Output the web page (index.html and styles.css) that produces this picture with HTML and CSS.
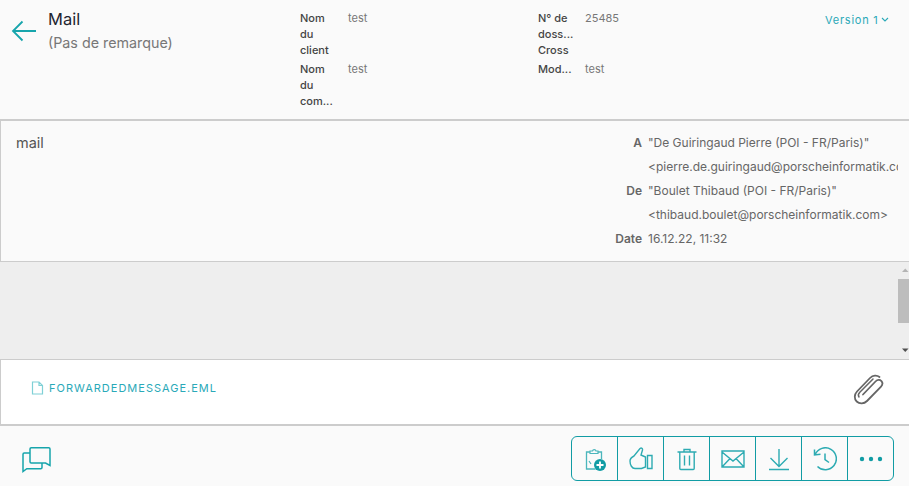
FILE: index.html
```html
<!DOCTYPE html>
<html lang="fr">
<head>
<meta charset="utf-8">
<title>Mail</title>
<link rel="stylesheet" href="styles.css">
</head>
<body>
<header class="head">
  <svg class="back" width="26" height="26" viewBox="0 0 26 26"><path d="M25 13H2M11.500 3.500L2 13l9.500 9.500" fill="none" stroke="#17a5ac" stroke-width="1.800"/></svg>
  <div class="title">
    <div class="name">Mail</div>
    <div class="remark">(Pas de remarque)</div>
  </div>
  <div class="meta">
    <div class="label">Nom<br>du<br>client</div><div class="value">test</div>
    <div class="label">N° de<br>doss...<br>Cross</div><div class="value">25485</div>
    <div class="label">Nom<br>du<br>com...</div><div class="value">test</div>
    <div class="label">Mod...</div><div class="value">test</div>
  </div>
  <div class="version">Version 1<svg width="8" height="6" viewBox="0 0 8 6"><path d="M1 1l3 3 3-3" fill="none" stroke="#2aa9b8" stroke-width="1.100"/></svg></div>
</header>
<section class="info">
  <div class="subject">mail</div>
  <div class="addr">
    <div class="k">A</div><div class="v">"De Guiringaud Pierre (POI - FR/Paris)"</div>
    <div class="k"></div><div class="v">&lt;pierre.de.guiringaud@porscheinformatik.com&gt;</div>
    <div class="k">De</div><div class="v">"Boulet Thibaud (POI - FR/Paris)"</div>
    <div class="k"></div><div class="v">&lt;thibaud.boulet@porscheinformatik.com&gt;</div>
    <div class="k">Date</div><div class="v">16.12.22, 11:32</div>
  </div>
</section>
<section class="content">
  <div class="scroll">
    <svg class="arrow" width="11" height="17" viewBox="0 0 11 17"><path d="M4 10h6.500L7.250 6.500z" fill="#b4b4b4"/></svg>
    <div class="track"><div class="thumb"></div></div>
    <svg class="arrow" width="11" height="17" viewBox="0 0 11 17"><path d="M4 6.500h6.500L7.250 10z" fill="#505050"/></svg>
  </div>
</section>
<section class="attach">
  <div class="file">
    <svg width="13" height="14" viewBox="0 0 13 14"><path d="M1.500 1h6.500l3.500 3.500V13h-10zM8 1v3.500h3.500" fill="none" stroke="#7fd0d6" stroke-width="1.200"/></svg>
    <span>FORWARDEDMESSAGE.EML</span>
  </div>
  <svg class="clip" width="36" height="34" viewBox="0 0 36 34"><path d="M13 22.500L25.500 9.500c2-2 4.500-2 5.800-.5 1.500 1.500 1.400 3.800-.5 5.800L17 29c-3 3-7.500 3.200-10.300.5C4 26.800 4.200 22.500 7 19.500L20 6c3-3 7-3 9.500-1" fill="none" stroke="#666" stroke-width="1.800" stroke-linecap="round"/><path d="M9 25c-1-1.500-.5-3.500.8-4.800L23 7" fill="none" stroke="#666" stroke-width="1.500" stroke-linecap="round"/></svg>
</section>
<footer class="foot">
  <svg class="chat" width="29" height="26" viewBox="0 0 29 26"><path d="M8 2a1.200 1.200 0 0 1 1.200-1.200h17.600A1.200 1.200 0 0 1 28 2v16.500l-4.500-2.500H9.200A1.200 1.200 0 0 1 8 14.800z" fill="none" stroke="#17a5ac" stroke-width="1.500"/><path d="M8 6H2.200A1.200 1.200 0 0 0 1 7.200V24.500l3.800-2.800h14a1.200 1.200 0 0 0 1.200-1.200V16" fill="none" stroke="#17a5ac" stroke-width="1.500"/></svg>
  <div class="actions">
    <button class="act"><svg width="24" height="24" viewBox="0 0 24 24"><path d="M12.500 22H3.500V5H7M15 5h3.500v7" fill="none" stroke="#4bb6bc" stroke-width="1.300"/><path d="M7 6.500V4h2.500a1.800 1.800 0 0 1 3.500 0H15v2.500zM6 14l2 3" fill="none" stroke="#4bb6bc" stroke-width="1.200"/><circle cx="17" cy="18" r="6" fill="#119ca4"/><path d="M17 14.500v7M13.500 18h7" stroke="#fff" stroke-width="1.800"/></svg></button>
    <button class="act"><svg width="24" height="23" viewBox="0 0 24 23"><path d="M1 14c0-3 2-4 4-5l6-7.500c1.500-1 2.800 0 2.500 1.500l-1.500 5 4.500 2v10l-4 1.500H6c-3 0-5-3.500-5-7.500zM18.500 8.500H23v13h-4.500z" fill="none" stroke="#2dabb2" stroke-width="1.400"/></svg></button>
    <button class="act"><svg width="22" height="24" viewBox="0 0 22 24"><path d="M1.500 5h19M8 5V2.500h6V5M3.800 5v16.500a1 1 0 0 0 1 1h12.400a1 1 0 0 0 1-1V5M8.500 8.500v10M13.500 8.500v10" fill="none" stroke="#2dabb2" stroke-width="1.400"/></svg></button>
    <button class="act"><svg width="24" height="20" viewBox="0 0 24 20"><path d="M1 2h22v16H1zM1 3l11 9 11-9M1 18l8-8.500M23 18l-8-8.500" fill="none" stroke="#2dabb2" stroke-width="1.400"/></svg></button>
    <button class="act"><svg width="22" height="24" viewBox="0 0 22 24"><path d="M11 2v17M2.500 11l8.500 8.500 8.500-8.500M1 22.500h20" fill="none" stroke="#2dabb2" stroke-width="1.400"/></svg></button>
    <button class="act"><svg width="24" height="24" viewBox="0 0 24 24"><path d="M2.200 7.500A11 11 0 1 1 4.500 19.500M1.500 2.500V8l6-.8M12 6.500v6l4 3" fill="none" stroke="#2dabb2" stroke-width="1.500"/></svg></button>
    <button class="act"><svg width="24" height="6" viewBox="0 0 24 6"><circle cx="3" cy="3" r="2.200" fill="#119ca4"/><circle cx="12" cy="3" r="2.200" fill="#119ca4"/><circle cx="21" cy="3" r="2.200" fill="#119ca4"/></svg></button>
  </div>
</footer>
</body>
</html>
```
FILE: styles.css
```css
* { box-sizing: border-box; }
html, body { margin: 0; height: 486px; overflow: hidden; }
body { width: 909px; background: #fafafa; font-family: Inter, "Liberation Sans", sans-serif; color: #555; display: flex; flex-direction: column; }
.head { height: 121px; flex: none; border-bottom: 2px solid #ccc; display: flex; padding: 10px 19px 0 12px; }
.back { margin-top: 8px; flex: none; margin-left: -1px; }
.title { width: 252px; margin-left: 11px; flex: none; }
.name { font-size: 16.500px; line-height: 20px; color: #1f2530; margin-top: -1px; }
.remark { font-size: 14.300px; line-height: 20px; color: #777; margin-top: 4px; }
.meta { width: 525px; flex: none; display: grid; grid-template-columns: 48px 190px 47px 1fr; row-gap: 3px; align-content: start; font-size: 11px; line-height: 16px; }
.label { font-weight: 500; color: #444; }
.value { color: #777; }
.version { font-size: 11px; color: #2aa9b8; line-height: 20px; letter-spacing: .75px; white-space: nowrap; }
.version svg { margin-left: 3px; vertical-align: 1px; }
.info { height: 141px; flex: none; border-left: 1px solid #ccc; border-bottom: 1px solid #ccc; display: flex; justify-content: space-between; padding: 10px 11px 0 15px; }
.subject { font-size: 14.500px; line-height: 24px; color: #555; }
.addr { width: 286px; flex: none; display: grid; grid-template-columns: 30px 250px; column-gap: 6px; align-content: start; font-size: 12px; line-height: 24px; margin-left: auto; }
.k { text-align: right; font-weight: 600; color: #666; }
.v { color: #666; white-space: nowrap; overflow: hidden; }
.content { height: 98px; flex: none; background: #eee; border-bottom: 1px solid #ccc; display: flex; justify-content: flex-end; }
.scroll { width: 11px; height: 97px; display: flex; flex-direction: column; }
.arrow { flex: none; }
.track { flex: 1; }
.thumb { height: 44px; background: #bdbdbd; }
.attach { height: 66px; flex: none; background: #fff; border-left: 1px solid #ccc; border-bottom: 2px solid #ccc; display: flex; align-items: center; justify-content: space-between; padding: 0 23px 0 30px; }
.file { display: flex; align-items: center; gap: 5px; font-size: 11px; letter-spacing: 1px; color: #2aa9b8; margin-bottom: 8px; }
.clip { margin-bottom: 6px; }
.foot { flex: 1; display: flex; align-items: flex-start; justify-content: space-between; padding: 10px 15px 0 22px; }
.chat { margin-top: 11px; }
.actions { display: flex; height: 45px; border: 1px solid #119ca4; border-radius: 6px; }
.act { width: 46px; height: 100%; padding: 0; background: none; border: 0; border-left: 1px solid #119ca4; display: flex; align-items: center; justify-content: center; }
.act:first-child { border-left: 0; width: 45px; }
```
